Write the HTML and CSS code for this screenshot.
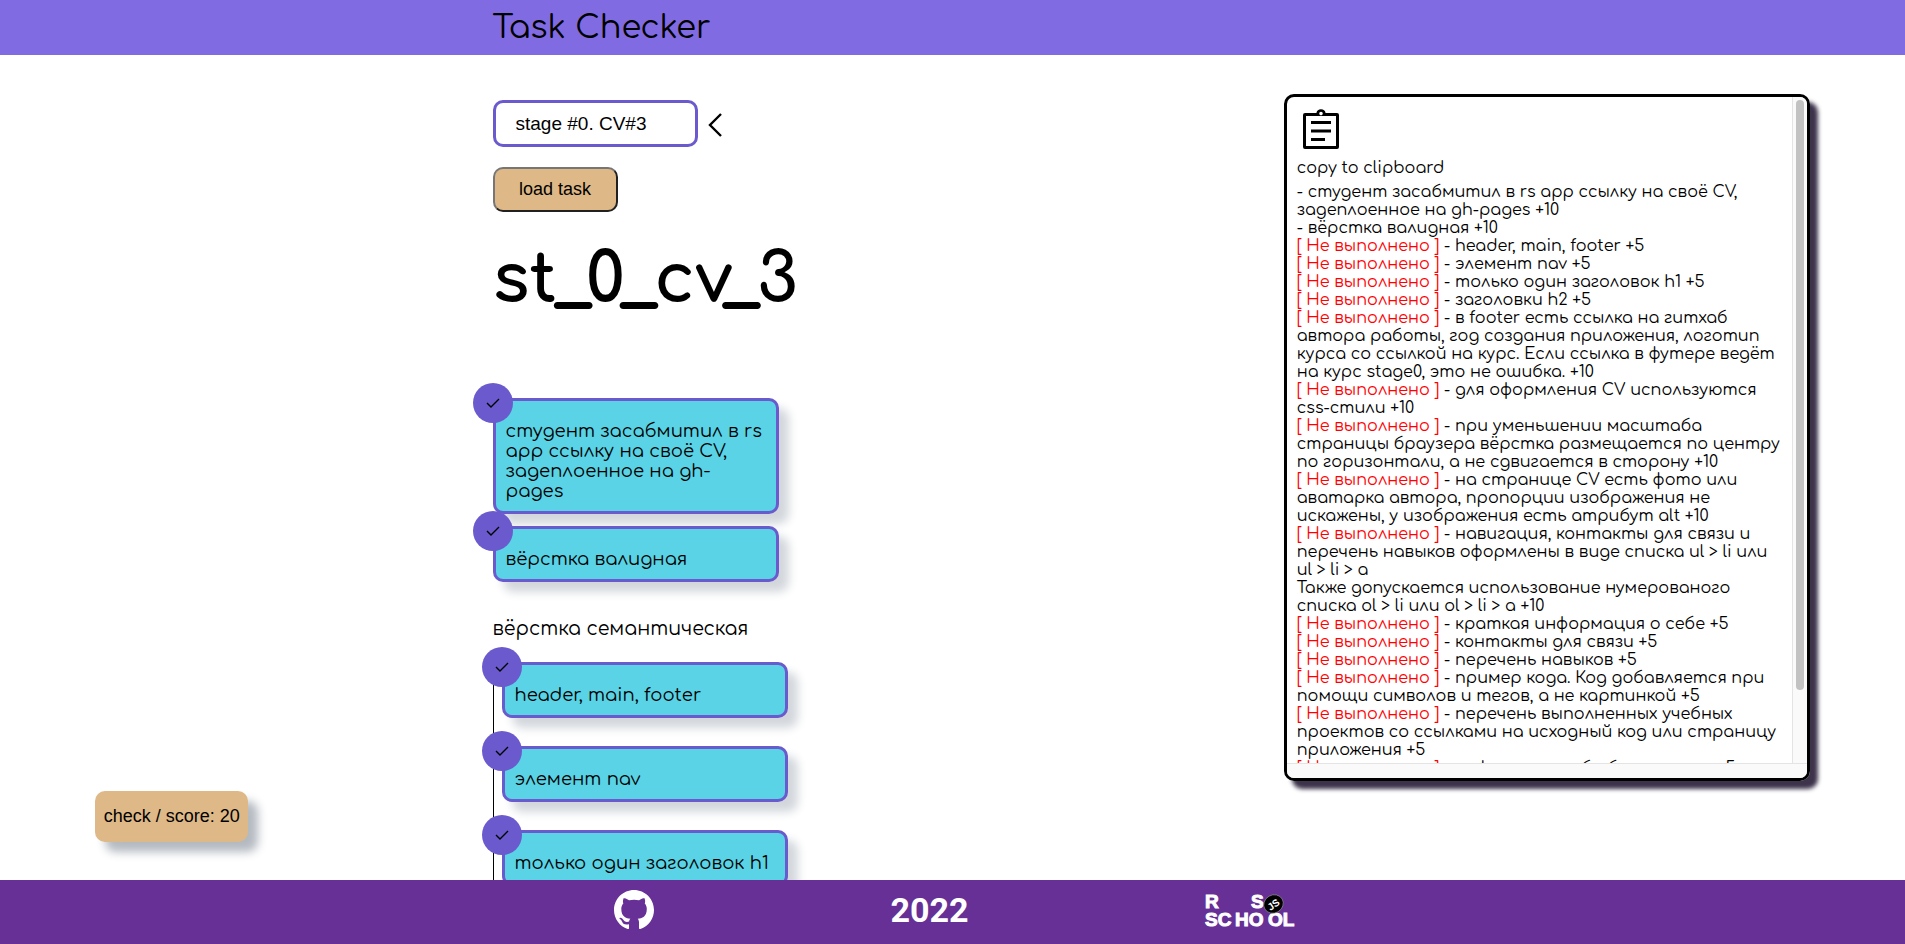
FILE: index.html
```
<!DOCTYPE html>
<html lang="ru">
<head>
<meta charset="utf-8">
<title>Task Checker</title>
<link rel="stylesheet" href="styles.css">
</head>
<body>
<header class="header"><div class="container title">Task Checker</div></header>

<main class="main">
  <aside class="score">
    <button class="score-button" type="button">check / score: 20</button>
  </aside>

  <section class="content">
    <div class="picker">
      <input class="picker-input" type="text" value="stage #0. CV#3" aria-label="stage">
      <button class="picker-toggle" type="button" aria-label="open list">
        <svg width="14" height="24" viewBox="0 0 14 24" fill="none" stroke="#000" stroke-width="2.4"><path d="M13 1 2 12l11 11"/></svg>
      </button>
    </div>
    <button class="load" type="button">load task</button>
    <h1 class="task-name">st_0_cv_3</h1>

    <ul class="cards">
      <li class="card"><span class="check"><svg width="14" height="10" viewBox="0 0 14 10"><path d="M1 5l4 4 8-8"/></svg></span>студент засабмитил в rs app ссылку на своё CV, задеплоенное на gh-pages</li>
      <li class="card"><span class="check"><svg width="14" height="10" viewBox="0 0 14 10"><path d="M1 5l4 4 8-8"/></svg></span>вёрстка валидная</li>
    </ul>

    <h2 class="group-name">вёрстка семантическая</h2>
    <ul class="cards nested">
      <li class="card"><span class="check"><svg width="14" height="10" viewBox="0 0 14 10"><path d="M1 5l4 4 8-8"/></svg></span>header, main, footer</li>
      <li class="card"><span class="check"><svg width="14" height="10" viewBox="0 0 14 10"><path d="M1 5l4 4 8-8"/></svg></span>элемент nav</li>
      <li class="card"><span class="check"><svg width="14" height="10" viewBox="0 0 14 10"><path d="M1 5l4 4 8-8"/></svg></span>только один заголовок h1</li>
    </ul>
  </section>

  <aside class="report">
    <div class="report-view">
      <button class="copy" type="button">
        <svg class="copy-icon" width="48" height="48" viewBox="0 0 24 24"><path fill-rule="evenodd" d="M20 4h-5.700a2.350 2.350 0 0 0-4.600 0H4a1 1 0 0 0-1 1v16a1 1 0 0 0 1 1h16a1 1 0 0 0 1-1V5a1 1 0 0 0-1-1zm-8-.6a.9.9 0 1 1 0 1.800.9.9 0 0 1 0-1.800zM4.500 20.500v-15h15v15z M7 8h10v1.500H7z M7 12.300h10v1.500H7z M7 16.500h7V18H7z"/></svg>
        <span>copy to clipboard</span>
      </button>
      <div class="lines">
        <p>- студент засабмитил в rs app ссылку на своё CV, задеплоенное на gh-pages +10</p>
        <p>- вёрстка валидная +10</p>
        <p><span class="fail">[ Не выполнено ]</span> - header, main, footer +5</p>
        <p><span class="fail">[ Не выполнено ]</span> - элемент nav +5</p>
        <p><span class="fail">[ Не выполнено ]</span> - только один заголовок h1 +5</p>
        <p><span class="fail">[ Не выполнено ]</span> - заголовки h2 +5</p>
        <p><span class="fail">[ Не выполнено ]</span> - в footer есть ссылка на гитхаб автора работы, год создания приложения, логотип курса со ссылкой на курс. Если ссылка в футере ведёт на курс stage0, это не ошибка. +10</p>
        <p><span class="fail">[ Не выполнено ]</span> - для оформления CV используются css-стили +10</p>
        <p><span class="fail">[ Не выполнено ]</span> - при уменьшении масштаба страницы браузера вёрстка размещается по центру по горизонтали, а не сдвигается в сторону +10</p>
        <p><span class="fail">[ Не выполнено ]</span> - на странице CV есть фото или аватарка автора, пропорции изображения не искажены, у изображения есть атрибут alt +10</p>
        <p><span class="fail">[ Не выполнено ]</span> - навигация, контакты для связи и перечень навыков оформлены в виде списка ul &gt; li или ul &gt; li &gt; a</p>
        <p>Также допускается использование нумерованого списка ol &gt; li или ol &gt; li &gt; a +10</p>
        <p><span class="fail">[ Не выполнено ]</span> - краткая информация о себе +5</p>
        <p><span class="fail">[ Не выполнено ]</span> - контакты для связи +5</p>
        <p><span class="fail">[ Не выполнено ]</span> - перечень навыков +5</p>
        <p><span class="fail">[ Не выполнено ]</span> - пример кода. Код добавляется при помощи символов и тегов, а не картинкой +5</p>
        <p><span class="fail">[ Не выполнено ]</span> - перечень выполненных учебных проектов со ссылками на исходный код или страницу приложения +5</p>
        <p><span class="fail">[ Не выполнено ]</span> - информация об образовании +5</p>
      </div>
    </div>
    <div class="track-y"><div class="thumb"></div></div>
    <div class="track-x"></div>
  </aside>
</main>

<footer class="footer">
  <div class="container footer-row">
    <a href="#github" aria-label="GitHub"><svg class="block" width="40" height="40" viewBox="0 0 16 16" fill="#fff"><path d="M8 0C3.580 0 0 3.580 0 8c0 3.540 2.290 6.530 5.470 7.590.4.070.55-.17.55-.38 0-.19-.010-.82-.010-1.490-2.010.37-2.530-.49-2.690-.94-.090-.23-.48-.94-.82-1.130-.28-.15-.68-.52-.010-.53.63-.010 1.080.58 1.230.82.72 1.210 1.870.87 2.330.66.070-.52.28-.87.51-1.070-1.780-.2-3.640-.89-3.640-3.950 0-.87.31-1.590.82-2.150-.080-.2-.36-1.020.080-2.120 0 0 .67-.21 2.200.82.64-.18 1.320-.27 2-.27s1.360.090 2 .27c1.530-1.040 2.200-.82 2.200-.82.44 1.100.16 1.920.080 2.120.51.56.82 1.270.82 2.150 0 3.070-1.870 3.750-3.650 3.950.29.25.54.73.54 1.480 0 1.070-.010 1.930-.010 2.200 0 .21.15.46.55.38A8.010 8.010 0 0 0 16 8c0-4.420-3.580-8-8-8z"/></svg></a>
    <span class="year">2022</span>
    <a href="#school" aria-label="RS School"><svg class="block school" width="90" height="34" viewBox="0 0 90 34"><g fill="#fff" stroke="#fff"><text x="1" y="15">R</text><text x="47" y="15">S</text><text x="1" y="33">SC</text><text x="31" y="33">HO</text><text x="64" y="33">OL</text></g><ellipse cx="69.500" cy="11" rx="10" ry="9" fill="#000" stroke="#999" stroke-width=".6" transform="rotate(-30 69.500 11)"/><text class="js" x="63" y="15" fill="#fff" transform="rotate(-35 69.500 11)">JS</text></svg></a>
  </div>
</footer>
</body>
</html>
```
FILE: styles.css
```
* { box-sizing: border-box; }
body {
  margin: 0;
  height: 100vh;
  display: flex;
  flex-direction: column;
  overflow: hidden;
  background: #fff;
  color: #000;
  font-family: Comfortaa, Inter, "Noto Sans", sans-serif;
  font-size: 16px;
}
h1, h2, p, ul { margin: 0; padding: 0; }
ul { list-style: none; }
button, input { font-family: "Liberation Sans", Arial, sans-serif; color: #000; }
.container { width: 100%; max-width: 920px; margin: 0 auto; }
.header { background: #816be2; }
.title { padding-top: 1px; font-size: 32px; line-height: 54px; }

.main {
  flex: 1;
  min-height: 0;
  overflow: hidden;
  display: grid;
  grid-template-columns: calc((100vw - 920px) / 2) minmax(0, 1fr) 526px;
  grid-template-rows: minmax(0, 1fr);
  padding-right: 5vw;
}
.score { align-self: end; padding: 0 0 38px 5vw; }
.score-button {
  width: 153px;
  height: 51px;
  padding: 0;
  border: 0;
  border-radius: 10px;
  background: burlywood;
  font-size: 18px;
  box-shadow: 10px 10px 10px #b4bac1;
}

.content { padding-top: 45px; }
.picker { display: flex; align-items: center; gap: 10px; }
.picker-input {
  width: 205px;
  height: 47px;
  padding: 0 20px;
  border: 3px solid slateblue;
  border-radius: 10px;
  font-size: 19px;
}
.picker-toggle { display: flex; padding: 2px 0 0; border: 0; background: none; }
.load {
  display: block;
  width: 125px;
  height: 45px;
  margin-top: 20px;
  padding: 0;
  border: 2px solid;
  border-color: #767676 #212121 #212121 #767676;
  border-radius: 10px;
  background: burlywood;
  font-size: 18px;
}
.task-name { margin-top: 26px; font-size: 68px; line-height: 84px; font-weight: 700; }

.cards { display: flex; flex-direction: column; align-items: flex-start; gap: 12px; margin-top: 76px; }
.card {
  position: relative;
  width: 286px;
  padding: 20px 10px 10px;
  border: 3px solid slateblue;
  border-radius: 10px;
  background: #59d3e5;
  box-shadow: 10px 10px 10px #d3d7dc;
  font-size: 18px;
  line-height: 20px;
}
.check {
  position: absolute;
  left: -23px;
  top: -18px;
  width: 40px;
  height: 40px;
  display: grid;
  place-items: center;
  border-radius: 50%;
  background: slateblue;
}
.check path { fill: none; stroke: #000; stroke-width: 1.4; }
.group-name { margin-top: 37px; font-size: 19px; line-height: 20px; font-weight: 400; }
.nested { gap: 28px; margin-top: 11px; padding: 12px 0 28px 8px; border-left: 1px solid #000; }

.report {
  margin: 39px 0 99px;
  display: grid;
  grid-template: minmax(0, 1fr) 15px / minmax(0, 1fr) 15px;
  overflow: hidden;
  border: 3px solid #000;
  border-radius: 10px;
  box-shadow: 8px 8px 4px #3d334b;
}
.report-view { overflow: hidden; padding: 8px 10px 0; }
.copy { display: block; padding: 0; border: 0; background: none; font: inherit; line-height: 18px; text-align: left; }
.copy-icon { display: block; margin-bottom: 6px; }
.lines { margin-top: 6px; line-height: 18px; }
.fail { color: red; }
.track-y { padding: 3px 3px 0; border-left: 1px solid #e4e4e4; background: #fafafa; }
.thumb { height: 89%; border-radius: 4px; background: #c2c2c2; }
.track-x { grid-column: 1 / -1; border-top: 1px solid #e4e4e4; background: #fafafa; }

.footer { background: #663096; }
.footer-row { height: 64px; padding: 0 0 4px 4px; display: flex; align-items: center; justify-content: space-around; }
.block { display: block; }
.year { color: #fff; font-family: Roboto, sans-serif; font-weight: 700; font-size: 34px; line-height: 40px; }
.school { overflow: visible; font: 900 19px "Liberation Sans", Arial, sans-serif; }
.school .js { font-size: 10px; }
```
